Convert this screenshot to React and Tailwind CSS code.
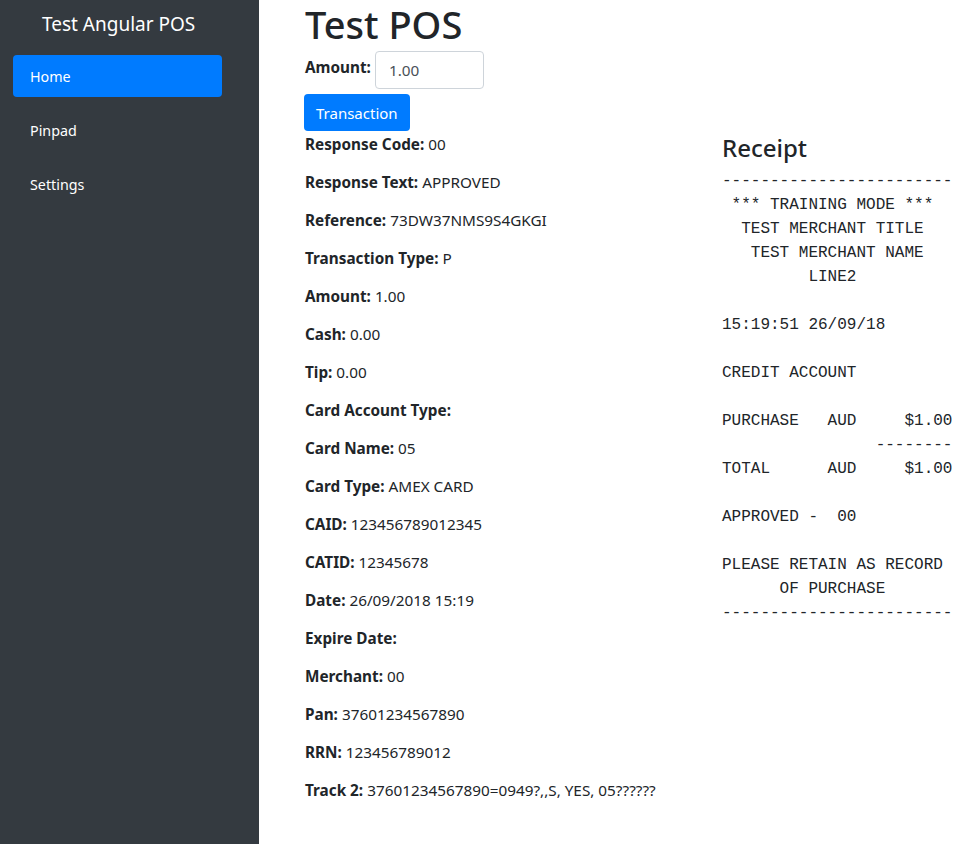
import React, { useState } from "react";

const fields = [
  ["Response Code:", "00"],
  ["Response Text:", "APPROVED"],
  ["Reference:", "73DW37NMS9S4GKGI"],
  ["Transaction Type:", "P"],
  ["Amount:", "1.00"],
  ["Cash:", "0.00"],
  ["Tip:", "0.00"],
  ["Card Account Type:", ""],
  ["Card Name:", "05"],
  ["Card Type:", "AMEX CARD"],
  ["CAID:", "123456789012345"],
  ["CATID:", "12345678"],
  ["Date:", "26/09/2018 15:19"],
  ["Expire Date:", ""],
  ["Merchant:", "00"],
  ["Pan:", "37601234567890"],
  ["RRN:", "123456789012"],
  ["Track 2:", "37601234567890=0949?,,S, YES, 05??????"],
];

const receipt = `------------------------
 *** TRAINING MODE ***
  TEST MERCHANT TITLE
   TEST MERCHANT NAME
         LINE2

15:19:51 26/09/18

CREDIT ACCOUNT

PURCHASE   AUD     $1.00
                --------
TOTAL      AUD     $1.00

APPROVED -  00

PLEASE RETAIN AS RECORD
      OF PURCHASE
------------------------`;

const App = () => {
  const [amount, setAmount] = useState("1.00");
  const navItems = ["Home", "Pinpad", "Settings"];

  return (
    <div className="flex min-h-[844px] text-[#212529] font-['Noto_Sans',sans-serif] text-[15.3px] leading-6">
      {/* Sidebar */}
      <div className="w-[259px] shrink-0 bg-[#343a40] px-[13px]">
        <div className="pt-[9px] pl-[29px] text-[19px] leading-[30px] text-white">Test Angular POS</div>
        <nav className="mt-[16px] flex flex-col gap-[12px] w-[209px] text-[14.3px]">
          {navItems.map((item, i) => (
            <a
              key={item}
              className={
                "flex items-center h-[42px] pt-[2px] px-[17px] rounded text-white " +
                (i === 0 ? "bg-[#007bff]" : "")
              }
            >
              {item}
            </a>
          ))}
        </nav>
      </div>

      {/* Main */}
      <div className="flex-1 pl-[46px]">
        <h1 className="text-[38px] leading-[48px] font-medium mb-[3px]">Test POS</h1>
        <div className="flex items-start h-[38px]">
          <label className="font-bold mt-[4px] mr-[4px]">Amount:</label>
          <input
            value={amount}
            onChange={(e) => setAmount(e.target.value)}
            className="w-[109px] h-[38px] border border-[#ced4da] rounded px-[13px] text-[#495057] outline-none"
          />
        </div>
        <button className="mt-[5px] h-[37px] px-[12px] bg-[#007bff] text-white rounded ml-[-1px] text-[15px]">
          Transaction
        </button>

        <div className="flex pt-[1px]">
          {/* Result fields */}
          <div className="w-[417px] flex flex-col gap-[14px]">
            {fields.map(([label, value]) => (
              <div key={label}>
                <b>{label}</b> {value}
              </div>
            ))}
          </div>

          {/* Receipt */}
          <div className="pt-[1px]">
            <h4 className="text-[24px] leading-[29px] font-medium mb-[7px]">Receipt</h4>
            <pre className="font-['Liberation_Mono',monospace] text-[16px] leading-6 text-[#212529]">{receipt}</pre>
          </div>
        </div>
      </div>
    </div>
  );
};

export default App;
